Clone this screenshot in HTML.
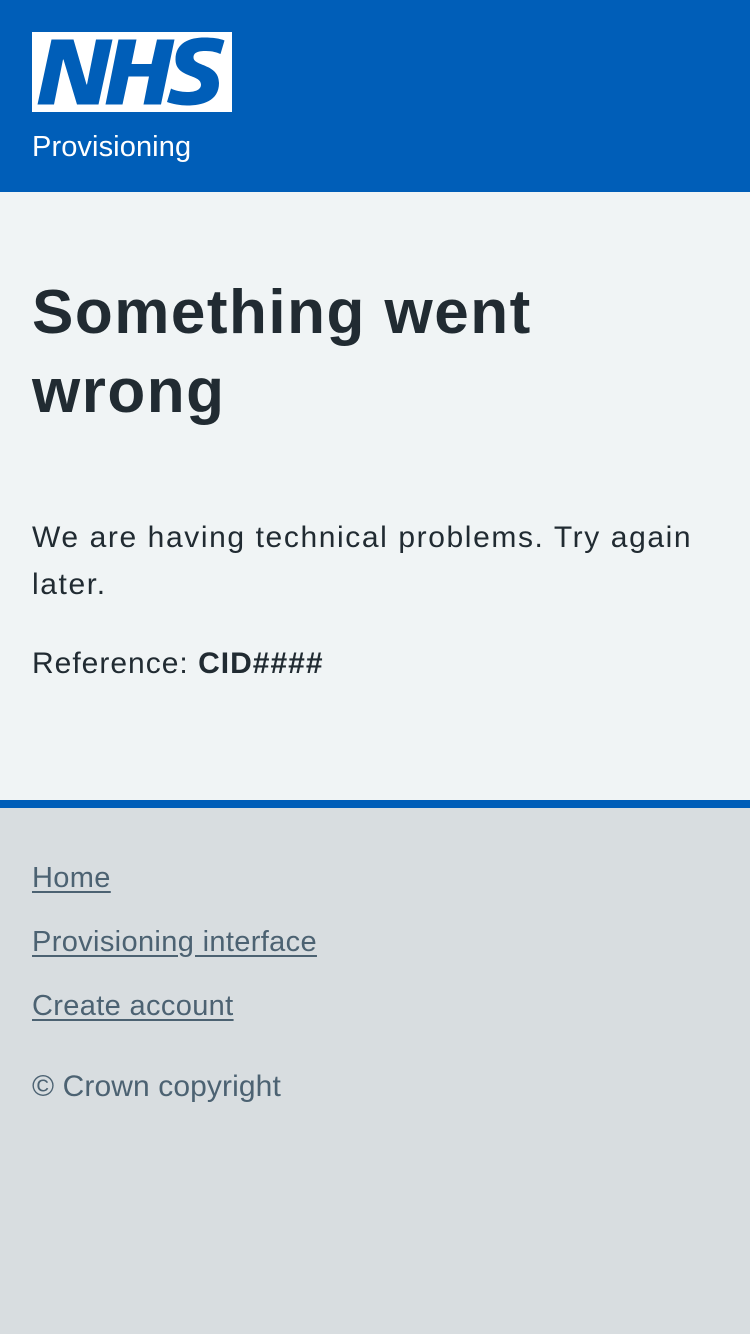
<!DOCTYPE html>
<html><head><meta charset="utf-8"><style>
*{margin:0;padding:0;box-sizing:border-box}
body{width:750px;height:1334px;background:#d8dde0;font-family:"Liberation Sans",sans-serif;position:relative;overflow:hidden}
.hdr{position:absolute;left:0;top:0;width:750px;height:192px;background:#005eb8}
.logo{position:absolute;left:32px;top:32px;width:200px;height:80px}
.t{position:absolute;white-space:nowrap}
.main{position:absolute;left:0;top:192px;width:750px;height:608px;background:#f0f4f5}
.bar{position:absolute;left:0;top:800px;width:750px;height:8px;background:#005eb8}
.f{color:#4c6272;font-size:29px;letter-spacing:0.35px;text-decoration:underline;text-underline-offset:4px}
</style></head><body>
<div class="hdr">
<svg class="logo" viewBox="0 0 40 16" preserveAspectRatio="none"><path fill="#fff" d="M0 0h40v16H0z"/><path fill="#005eb8" d="M3.9 1.5h4.4l2.6 9h.1l1.8-9h3.3l-2.8 13H9l-2.7-9h-.1l-1.800 9H1.1M17.3 1.5h3.6l-1 4.9h4L25 1.5h3.5l-2.7 13h-3.5l1.1-5.6h-4.1l-1.2 5.600h-3.4M37.7 4.4c-.7-.3-1.6-.6-2.9-.6-1.4 0-2.5.2-2.5 1.3 0 1.8 5.1 1.2 5.1 5.1 0 3.6-3.3 4.5-6.4 4.5-1.3 0-2.9-.3-4-.7l.8-2.7c.7.4 2.1.7 3.2.7s2.8-.2 2.8-1.5c0-2.100-5.1-1.3-5.1-5 0-3.4 2.9-4.4 5.8-4.4 1.6 0 3.1.2 4 .6"/></svg>
<div class="t" style="left:32px;top:129px;color:#fff;font-size:29px;line-height:36px;letter-spacing:0.1px">Provisioning</div>
</div>
<div class="main"></div>
<div class="t" style="left:32px;top:273px;color:#212b32;font-size:62px;font-weight:bold;line-height:79px;letter-spacing:1.5px">Something went<br>wrong</div>
<div class="t" style="left:32px;top:514px;color:#212b32;font-size:30px;line-height:47px;letter-spacing:1.6px">We are having technical problems. Try again<br>later.</div>
<div class="t" style="left:32px;top:644px;color:#212b32;font-size:30px;line-height:40px;letter-spacing:1px">Reference: <b>CID####</b></div>
<div class="bar"></div>
<div class="t f" style="left:32px;top:862px">Home</div>
<div class="t f" style="left:32px;top:926px">Provisioning interface</div>
<div class="t f" style="left:32px;top:990px">Create account</div>
<div class="t" style="left:32px;top:1070px;color:#4c6272;font-size:30px;letter-spacing:0.1px">© Crown copyright</div>
</body></html>
